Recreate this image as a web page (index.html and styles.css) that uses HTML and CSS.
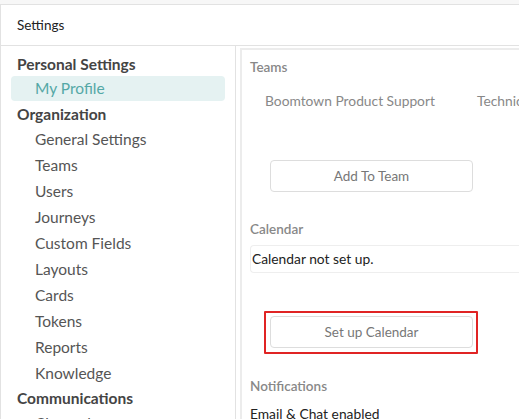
FILE: index.html
```html
<!DOCTYPE html>
<html>
<head>
<meta charset="utf-8">
<link rel="stylesheet" href="styles.css">
</head>
<body>
<div class="app">
  <div class="header">Settings</div>
  <div class="content">
    <nav class="sidebar">
      <div class="nav-heading">Personal Settings</div>
      <div class="nav-item active">My Profile</div>
      <div class="nav-heading">Organization</div>
      <div class="nav-item">General Settings</div>
      <div class="nav-item">Teams</div>
      <div class="nav-item">Users</div>
      <div class="nav-item">Journeys</div>
      <div class="nav-item">Custom Fields</div>
      <div class="nav-item">Layouts</div>
      <div class="nav-item">Cards</div>
      <div class="nav-item">Tokens</div>
      <div class="nav-item">Reports</div>
      <div class="nav-item">Knowledge</div>
      <div class="nav-heading">Communications</div>
      <div class="nav-item">Channels</div>
    </nav>
    <main class="main">
      <div class="panel">
        <div class="label label-teams">Teams</div>
        <div class="team-list">
          <span class="team">Boomtown Product Support</span>
          <span class="team">Technical Support</span>
        </div>
        <button class="btn btn-add">Add To Team</button>
        <div class="label label-cal">Calendar</div>
        <div class="cal-box">Calendar not set up.</div>
        <div class="highlight">
          <button class="btn btn-cal">Set up Calendar</button>
        </div>
        <div class="label label-notif">Notifications</div>
        <div class="value">Email &amp; Chat enabled</div>
      </div>
    </main>
  </div>
</div>
</body>
</html>
```
FILE: styles.css
```css
html, body {
  margin: 0;
  padding: 0;
  height: 100%;
  overflow: hidden;
}
body {
  background: #f7f7f7;
  font-family: "Lato", "Open Sans", sans-serif;
  color: #444;
}
.app {
  margin-top: 4px;
  background: #fff;
  border-top: 1px solid #e2e2e2;
  border-left: 1px solid #e2e2e2;
  height: 100%;
}
.header {
  height: 40px;
  line-height: 40px;
  padding-left: 16px;
  font-size: 13.5px;
  color: #222;
  border-bottom: 1px solid #e2e2e2;
}
.content {
  display: flex;
  height: 100%;
}
.sidebar {
  flex: none;
  border-right: 1px solid #e2e2e2;
  padding-top: 6px;
  box-sizing: border-box;
  width: 235px;
}
.nav-heading {
  height: 24px;
  line-height: 24px;
  padding-left: 16px;
  font-size: 15.5px;
  font-weight: 700;
  color: #444;
}
.nav-item {
  height: 26px;
  line-height: 26px;
  padding-left: 34px;
  font-size: 15.5px;
  color: #555;
}
.nav-item.active {
  margin-left: 10px;
  width: 214px;
  box-sizing: border-box;
  padding-left: 24px;
  height: 25px;
  line-height: 25px;
  margin-bottom: 1px;
  background: #e5f2f2;
  border-radius: 4px;
  color: #54a8a6;
}
.main {
  flex: 1;
  padding: 2px 0 0 4px;
  overflow: hidden;
}
.panel {
  width: 400px;
  border: 2px solid #ececec;
  border-right: none;
  padding: 8px 0 0 8px;
  height: 100%;
}
.label {
  font-size: 13.5px;
  line-height: 18px;
  color: #888;
  font-weight: 600;
}
.team-list {
  margin-top: 16px;
  padding-left: 15px;
  display: flex;
  gap: 42px;
  white-space: nowrap;
  font-size: 13.8px;
  line-height: 18px;
  color: #888;
}
.btn {
  display: block;
  width: 203px;
  height: 32px;
  margin-left: 20px;
  background: #fff;
  border: 1px solid #ddd;
  border-radius: 4px;
  font-family: inherit;
  font-size: 13.5px;
  color: #777;
  padding: 0;
}
.btn-add {
  margin-top: 50px;
}
.label-cal {
  margin-top: 28px;
}
.cal-box {
  margin-top: 7px;
  height: 28px;
  line-height: 26px;
  box-sizing: border-box;
  border: 1px solid #eeeeee;
  border-right: none;
  border-radius: 4px 0 0 4px;
  padding-left: 1px;
  font-size: 13.8px;
  color: #222;
}
.highlight {
  margin-top: 38px;
  margin-left: 14px;
  width: 214px;
  box-sizing: border-box;
  padding: 3px 4px 4px;
  border: 2px solid #e02424;
  border-radius: 1px;
}
.highlight .btn {
  margin-left: 0;
}
.label-notif {
  margin-top: 23px;
}
.value {
  margin-top: 10px;
  font-size: 13.8px;
  line-height: 18px;
  color: #222;
}
```
